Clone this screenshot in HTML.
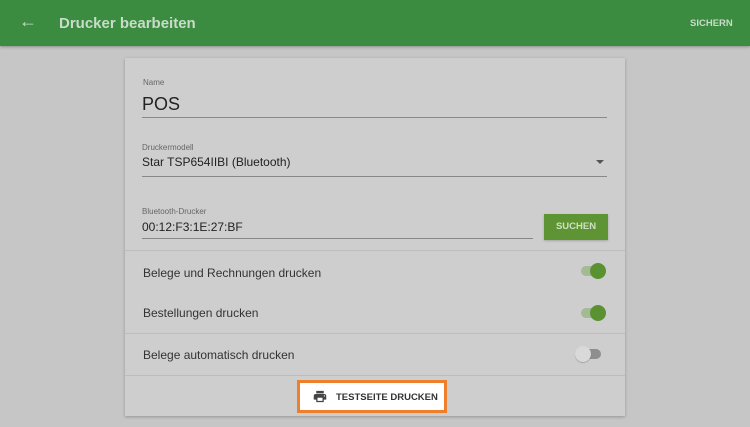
<!DOCTYPE html>
<html><head><style>
body{margin:0;width:750px;height:427px;background:#c6c6c6;font-family:"Liberation Sans",sans-serif;position:relative;overflow:hidden}
.hdr{position:absolute;left:0;top:0;width:750px;height:46px;background:#3b8b40;box-shadow:0 1px 3px rgba(0,0,0,.3)}
.t{position:absolute;color:#c9dcc9}
.card{position:absolute;left:125px;top:58px;width:500px;height:358px;background:#cecece;box-shadow:0 1px 3px rgba(0,0,0,.25)}
.a{position:absolute}
.lbl{font-size:8px;color:#666}
.ln{position:absolute;height:1px;background:#888}
.dv{position:absolute;left:0;width:500px;height:1px;background:#bdbdbd}
.row{position:absolute;left:18px;font-size:12px;color:#333}
.sw{position:absolute;width:20px;height:10px;border-radius:5px}
.kn{position:absolute;width:16px;height:16px;border-radius:50%}
</style></head><body>
<div class="hdr">
<div class="t" style="left:19px;top:11px;font-size:18px">&#8592;</div>
<div class="t" style="left:59px;top:15px;font-size:15px;font-weight:bold">Drucker bearbeiten</div>
<div class="t" style="left:690px;top:18px;font-size:9.5px;font-weight:bold">SICHERN</div>
</div>
<div class="card">
<div class="a lbl" style="left:18px;top:20px">Name</div>
<div class="a" style="left:17px;top:36px;font-size:18px;color:#222">POS</div>
<div class="ln" style="left:17px;top:59px;width:465px"></div>
<div class="a lbl" style="left:17px;top:85px">Druckermodell</div>
<div class="a" style="left:17px;top:97px;font-size:12px;color:#222">Star TSP654IIBI (Bluetooth)</div>
<div class="a" style="left:471px;top:102px;width:0;height:0;border-left:4px solid transparent;border-right:4px solid transparent;border-top:4px solid #555"></div>
<div class="ln" style="left:17px;top:118px;width:465px"></div>
<div class="a lbl" style="left:17px;top:149px">Bluetooth-Drucker</div>
<div class="a" style="left:17px;top:162px;font-size:12px;color:#222">00:12:F3:1E:27:BF</div>
<div class="ln" style="left:17px;top:180px;width:391px"></div>
<div class="a" style="left:419px;top:156px;width:64px;height:26px;background:#5e9433;color:#cfe0c4;font-size:9.5px;font-weight:bold;text-align:center;line-height:26px;box-shadow:0 1px 2px rgba(0,0,0,.2)">SUCHEN</div>
<div class="dv" style="top:192px"></div>
<div class="row" style="top:208px">Belege und Rechnungen drucken</div>
<div class="sw" style="left:456px;top:208px;background:#a4b996"></div><div class="kn" style="left:465px;top:205px;background:#5a9231"></div>
<div class="row" style="top:248px">Bestellungen drucken</div>
<div class="sw" style="left:456px;top:250px;background:#a4b996"></div><div class="kn" style="left:465px;top:247px;background:#5a9231"></div>
<div class="dv" style="top:275px"></div>
<div class="row" style="top:290px">Belege automatisch drucken</div>
<div class="sw" style="left:456px;top:291px;background:#8e8e8e"></div><div class="kn" style="left:450px;top:288px;background:#d9d9d9;box-shadow:0 1px 1px rgba(0,0,0,.2)"></div>
<div class="dv" style="top:317px"></div>
</div>
<div class="a" style="left:297px;top:380px;width:144px;height:27px;background:#fff;border:3px solid #ef7f2c">
<svg class="a" style="left:12px;top:6px" width="16" height="15" viewBox="0 0 24 24"><path fill="#444" d="M19 8H5c-1.66 0-3 1.34-3 3v6h4v4h12v-4h4v-6c0-1.66-1.34-3-3-3zm-3 11H8v-5h8v5zm3-7c-.55 0-1-.45-1-1s.45-1 1-1 1 .45 1 1-.45 1-1 1zm-1-9H6v4h12V3z"/></svg>
<div class="a" style="left:36px;top:9px;font-size:9.5px;font-weight:bold;color:#333">TESTSEITE DRUCKEN</div>
</div>
</body></html>
